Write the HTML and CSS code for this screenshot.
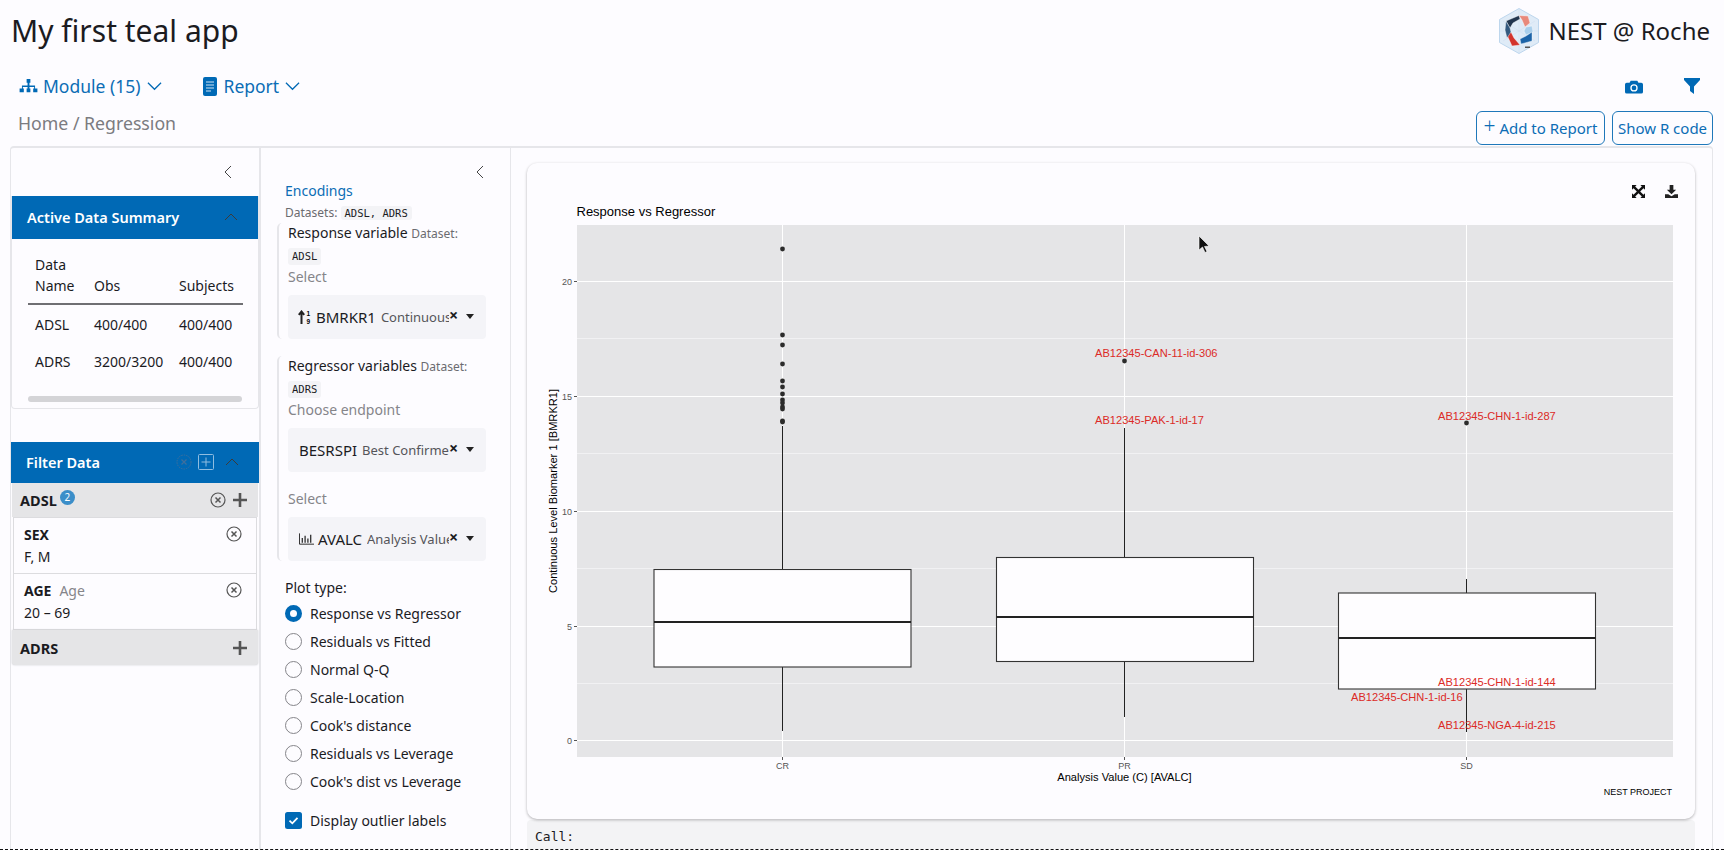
FILE: index.html
```html
<!DOCTYPE html>
<html lang="en">
<head>
  <meta charset="UTF-8">
  <title>My first teal app</title>
  <link rel="stylesheet" href="styles.css">
</head>
<body>
<div class="page">

  <!-- Title row -->
  <header class="top-bar">
    <h1 class="app-title">My first teal app</h1>
    <div class="brand">
      <svg class="brand-logo" viewBox="0 0 40 46">
        <polygon points="20,0.500 39.500,11.500 39.500,34.500 20,45.500 0.500,34.500 0.500,11.500" fill="#dfebf7" stroke="#bdd6ed"/>
        <path d="M1 23H39M20 1V45M4 13L36 33M36 13L4 33" stroke="#cadcf0" stroke-width="0.400"/>
        <g stroke="#fff" stroke-width="0.400">
          <path d="M7 13L20 7.500L21 11L14 15L11 20Z" fill="#22364f"/>
          <path d="M20 7.500L29 8L31 15L26 19L23 12Z" fill="#e8897b"/>
          <path d="M27 19L33 18L34 24L27 27L25 23Z" fill="#a9cfec"/>
          <path d="M33 24L33 33L22 36L21 31L27 28Z" fill="#1c64a8"/>
          <path d="M21 37L13 38L8 27L12 24L15 30Z" fill="#d3332c"/>
          <path d="M7 13L11 20L12 24L8 30L6 22Z" fill="#33597f"/>
        </g>
        <path d="M26 38.500h5v1.500h-5z" fill="#555"/>
      </svg>
      <span class="brand-name">NEST @ Roche</span>
    </div>
  </header>

  <!-- Nav row -->
  <nav class="nav-bar">
    <a class="nav-link nav-module">
      <svg class="nav-icon" viewBox="0 0 20 16"><path d="M8 0h4v4h-1v3h6v3h2.500v4h-4.500v-4h1v-1.500h-5v1.500h1v4h-4v-4h1v-1.500h-5v1.500h1v4h-4.500v-4h2.500v-3h6v-3h-1z" fill="#0069b5"/></svg>
      Module (15)
      <svg class="nav-caret" viewBox="0 0 16 10"><path d="M1 1.500L8 8.500L15 1.500" fill="none" stroke="#0069b5" stroke-width="1.300"/></svg>
    </a>
    <a class="nav-link nav-report">
      <svg class="nav-icon-file" viewBox="0 0 14 19"><rect width="14" height="19" rx="2" fill="#0069b5"/><path d="M3 5h8M3 8h8M3 11h8M3 14h5" stroke="#cfe3f3" stroke-width="1.100"/></svg>
      Report
      <svg class="nav-caret" viewBox="0 0 16 10"><path d="M1 1.500L8 8.500L15 1.500" fill="none" stroke="#0069b5" stroke-width="1.300"/></svg>
    </a>
    <div class="nav-tools">
      <svg class="tool-camera" viewBox="0 0 19 15"><path d="M6 1.500h7l1.200 2h3a1.800 1.800 0 0 1 1.800 1.800v7.900a1.800 1.800 0 0 1-1.800 1.800h-15.400a1.800 1.800 0 0 1-1.800-1.800v-7.900a1.800 1.800 0 0 1 1.800-1.800h3z" fill="#0069b5"/><circle cx="9.500" cy="9" r="3.200" fill="none" stroke="#fff" stroke-width="1.400"/></svg>
      <svg class="tool-filter" viewBox="0 0 16 16"><path d="M0 0h16v2L10 8.500V16L6 13V8.500L0 2z" fill="#0069b5"/></svg>
    </div>
  </nav>

  <!-- Breadcrumb row -->
  <div class="crumb-row">
    <div class="crumbs">Home / Regression</div>
    <div class="crumb-buttons">
      <button class="outline-btn btn-report"><span class="plus">+</span> Add to Report</button>
      <button class="outline-btn btn-code">Show R code</button>
    </div>
  </div>

  <main class="workspace">

    <!-- Filter panel -->
    <aside class="side-col">
      <div class="collapse-row">
        <svg class="chevron" viewBox="0 0 8 14"><path d="M7 1L1 7L7 13" fill="none" stroke="#444" stroke-width="1"/></svg>
      </div>

      <section class="summary">
        <div class="blue-head">
          <span>Active Data Summary</span>
          <svg class="head-caret" viewBox="0 0 14 8"><path d="M1 7L7 1L13 7" fill="none" stroke="#3b3b3b" stroke-width="1"/></svg>
        </div>
        <div class="summary-body">
          <table class="summary-table">
            <thead>
              <tr><th class="col-name">Data<br>Name</th><th class="col-obs">Obs</th><th>Subjects</th></tr>
            </thead>
            <tbody>
              <tr><td>ADSL</td><td>400/400</td><td>400/400</td></tr>
              <tr><td>ADRS</td><td>3200/3200</td><td>400/400</td></tr>
            </tbody>
          </table>
          <div class="fake-scroll"></div>
        </div>
      </section>

      <section class="filter-box">
        <div class="blue-head filter-head">
          <span>Filter Data</span>
          <svg class="head-x" viewBox="0 0 16 16"><circle cx="8" cy="8" r="7" fill="none" stroke="#3f6f9c" stroke-width="1" stroke-dasharray="1.500 1"/><path d="M5.500 5.500l5 5M10.500 5.500l-5 5" stroke="#3f6f9c" stroke-width="1.200"/></svg>
          <svg class="head-plus" viewBox="0 0 16 16"><rect x="0.500" y="0.500" width="15" height="15" rx="1" fill="none" stroke="#8fbde0"/><path d="M8 3.500v9M3.500 8h9" stroke="#8fbde0"/></svg>
          <svg class="head-caret" viewBox="0 0 14 8"><path d="M1 7L7 1L13 7" fill="none" stroke="#3b3b3b" stroke-width="1"/></svg>
        </div>

        <div class="data-row">
          <b>ADSL</b><span class="count-badge">2</span>
          <svg class="x-circle x-row" viewBox="0 0 16 16"><circle cx="8" cy="8" r="7" fill="none" stroke="#555" stroke-width="1.200"/><path d="M5.500 5.500l5 5M10.500 5.500l-5 5" stroke="#555" stroke-width="1.500"/></svg>
          <svg class="row-plus" viewBox="0 0 14 14"><path d="M7 0v14M0 7h14" stroke="#555" stroke-width="2.600"/></svg>
        </div>
        <div class="filter-card">
          <div class="filter-line">
            <b>SEX</b>
            <svg class="x-circle" viewBox="0 0 16 16"><circle cx="8" cy="8" r="7" fill="none" stroke="#555" stroke-width="1.200"/><path d="M5.500 5.500l5 5M10.500 5.500l-5 5" stroke="#555" stroke-width="1.500"/></svg>
          </div>
          <div class="filter-value">F, M</div>
        </div>
        <div class="filter-card">
          <div class="filter-line">
            <b>AGE</b><span class="filter-sub">Age</span>
            <svg class="x-circle" viewBox="0 0 16 16"><circle cx="8" cy="8" r="7" fill="none" stroke="#555" stroke-width="1.200"/><path d="M5.500 5.500l5 5M10.500 5.500l-5 5" stroke="#555" stroke-width="1.500"/></svg>
          </div>
          <div class="filter-value">20 – 69</div>
        </div>
        <div class="data-row data-row-last">
          <b>ADRS</b>
          <svg class="row-plus row-plus-only" viewBox="0 0 14 14"><path d="M7 0v14M0 7h14" stroke="#555" stroke-width="2.600"/></svg>
        </div>
      </section>
    </aside>

    <!-- Encodings panel -->
    <aside class="enc-col">
      <div class="collapse-row enc-collapse">
        <svg class="chevron" viewBox="0 0 8 14"><path d="M7 1L1 7L7 13" fill="none" stroke="#444" stroke-width="1"/></svg>
      </div>
      <div class="enc-title">Encodings</div>
      <div class="enc-datasets">Datasets: <code class="chip">ADSL, ADRS</code></div>

      <div class="enc-group">
        <div class="enc-label">Response variable <small>Dataset:</small></div>
        <code class="chip chip-block">ADSL</code>
        <div class="enc-hint">Select</div>
        <div class="select-box">
          <svg class="opt-icon" viewBox="0 0 14 14"><path d="M3.500 14V2M0.800 4.800L3.500 1.500L6.200 4.800" fill="none" stroke="#222" stroke-width="2"/><text x="8.500" y="6" class="opt-digit">1</text><text x="8.500" y="13.500" class="opt-digit">9</text></svg>
          <span class="opt-main">BMRKR1</span><span class="opt-sub">Continuous</span>
          <span class="opt-x">×</span><span class="opt-caret"></span>
        </div>
      </div>

      <div class="enc-group enc-group-two">
        <div class="enc-label">Regressor variables <small>Dataset:</small></div>
        <code class="chip chip-block">ADRS</code>
        <div class="enc-hint">Choose endpoint</div>
        <div class="select-box">
          <span class="opt-main">BESRSPI</span><span class="opt-sub">Best Confirmed</span>
          <span class="opt-x">×</span><span class="opt-caret"></span>
        </div>
        <div class="enc-hint hint-gap">Select</div>
        <div class="select-box">
          <svg class="opt-icon opt-chart" viewBox="0 0 16 12"><path d="M0.500 0V11.500H16" fill="none" stroke="#222"/><path d="M3.500 5v5M6.500 2.500v7.500M9.500 5.500v4.500M12.500 1.500v8.500" stroke="#222" stroke-width="1.300"/></svg>
          <span class="opt-main">AVALC</span><span class="opt-sub">Analysis Value</span>
          <span class="opt-x">×</span><span class="opt-caret"></span>
        </div>
      </div>

      <div class="plot-type">Plot type:</div>
      <ul class="radio-list">
        <li><span class="radio radio-on"></span>Response vs Regressor</li>
        <li><span class="radio"></span>Residuals vs Fitted</li>
        <li><span class="radio"></span>Normal Q-Q</li>
        <li><span class="radio"></span>Scale-Location</li>
        <li><span class="radio"></span>Cook's distance</li>
        <li><span class="radio"></span>Residuals vs Leverage</li>
        <li><span class="radio"></span>Cook's dist vs Leverage</li>
      </ul>
      <div class="check-row">
        <svg class="check" viewBox="0 0 17 17"><rect width="17" height="17" rx="2.500" fill="#0069b5"/><path d="M4.500 8.700L7.300 11.300L12.500 5.800" fill="none" stroke="#fff" stroke-width="1.800"/></svg>
        Display outlier labels
      </div>
    </aside>

    <!-- Plot output -->
    <section class="output-col">
      <div class="plot-card">
        <div class="plot-tools">
          <svg class="plot-tool" viewBox="0 0 14 14"><path d="M0 0h5L3.400 1.600 7 5.200 10.600 1.600 9 0h5v5l-1.600-1.600L8.800 7l3.600 3.600L14 9v5H9l1.600-1.600L7 8.800 3.400 12.400 5 14H0V9l1.600 1.600L5.200 7 1.600 3.400 0 5z" fill="#111"/></svg>
          <svg class="plot-tool" viewBox="0 0 14 14"><path d="M5 0h4v5h3L7 10 2 5h3zM0 10h3.500L7 12l3.500-2H14v4H0z" fill="#222"/></svg>
        </div>
        <svg class="plot" viewBox="527 163 1168 656">
          <text x="576.500" y="216" class="plot-title">Response vs Regressor</text>
          <rect x="577" y="225" width="1096" height="532" fill="#e5e5e7"/>
          <!-- grid -->
          <g stroke="#f1f1f3" stroke-width="1">
            <path d="M577 338.500H1673M577 453.500H1673M577 568.500H1673M577 683.500H1673"/>
          </g>
          <g stroke="#fff" stroke-width="1">
            <path d="M577 281.500H1673M577 396.500H1673M577 511.500H1673M577 626.500H1673M577 740.500H1673"/>
            <path d="M782.500 225V757M1124.500 225V757M1466.500 225V757"/>
          </g>
          <!-- y axis -->
          <g stroke="#555" stroke-width="1">
            <path d="M574 281.500h3M574 396.500h3M574 511.500h3M574 626.500h3M574 740.500h3"/>
            <path d="M782.500 757v3M1124.500 757v3M1466.500 757v3"/>
          </g>
          <g class="tick-label" text-anchor="end">
            <text x="572" y="285">20</text>
            <text x="572" y="400">15</text>
            <text x="572" y="515">10</text>
            <text x="572" y="630">5</text>
            <text x="572" y="744">0</text>
          </g>
          <g class="tick-label" text-anchor="middle">
            <text x="782.500" y="769">CR</text>
            <text x="1124.500" y="769">PR</text>
            <text x="1466.500" y="769">SD</text>
          </g>
          <text class="axis-title" text-anchor="middle" transform="translate(557 491) rotate(-90)">Continuous Level Biomarker 1 [BMRKR1]</text>
          <text class="axis-title" x="1124.500" y="781" text-anchor="middle">Analysis Value (C) [AVALC]</text>
          <text class="caption" x="1672" y="795" text-anchor="end">NEST PROJECT</text>
          <!-- whiskers -->
          <g stroke="#222" stroke-width="1">
            <path d="M782.500 426V569M782.500 667V731"/>
            <path d="M1124.500 428V557M1124.500 662V717"/>
            <path d="M1466.500 579V593M1466.500 689V732"/>
          </g>
          <!-- boxes -->
          <g fill="#fefdff" stroke="#333" stroke-width="1.100">
            <rect x="654" y="569.500" width="257" height="97.500"/>
            <rect x="996.500" y="557.500" width="257" height="104"/>
            <rect x="1338.500" y="593" width="257" height="96"/>
          </g>
          <g stroke="#222" stroke-width="2">
            <path d="M654 622H911M996.500 617H1253.500M1338.500 638H1595.500"/>
          </g>
          <!-- outliers -->
          <g fill="#2b2b2b">
            <circle cx="782.500" cy="249" r="2.400"/>
            <circle cx="782.500" cy="335" r="2.400"/>
            <circle cx="782.500" cy="345" r="2.400"/>
            <circle cx="782.500" cy="364" r="2.400"/>
            <circle cx="782.500" cy="381" r="2.400"/>
            <circle cx="782.500" cy="387" r="2.400"/>
            <circle cx="782.500" cy="394" r="2.400"/>
            <circle cx="782.500" cy="400" r="2.400"/>
            <circle cx="782.500" cy="403" r="2.400"/>
            <circle cx="782.500" cy="407" r="2.400"/>
            <circle cx="782.500" cy="409" r="2.400"/>
            <circle cx="782.500" cy="421" r="2.400"/>
            <circle cx="782.500" cy="422" r="2.400"/>
            <circle cx="1124.500" cy="361" r="2.400"/>
            <circle cx="1466.500" cy="423" r="2.400"/>
          </g>
          <!-- outlier labels -->
          <g class="outlier-label">
            <text x="1095" y="357">AB12345-CAN-11-id-306</text>
            <text x="1095" y="424">AB12345-PAK-1-id-17</text>
            <text x="1438" y="420">AB12345-CHN-1-id-287</text>
            <text x="1438" y="686">AB12345-CHN-1-id-144</text>
            <text x="1351" y="701">AB12345-CHN-1-id-16</text>
            <text x="1438" y="729">AB12345-NGA-4-id-215</text>
          </g>
          <!-- mouse pointer in the shot -->
          <path d="M1199 236V250L1202.500 247L1205 252.500L1207 251.500L1204.500 246.500L1209 246Z" fill="#111" stroke="#fff" stroke-width="0.600"/>
        </svg>
      </div>
      <pre class="call-block">Call:</pre>
    </section>
  </main>
</div>
</body>
</html>
```

FILE: styles.css
```css
* {
  box-sizing: border-box;
}

body {
  margin: 0;
  background-color: #fdfcff;
  color: #1b1b1f;
  font-family: "Noto Sans", "Open Sans", sans-serif;
  font-size: 14px;
}

.page {
  height: 850px;
  overflow: hidden;
  border-bottom: 1px dashed #111;
}

/* Title row */
.top-bar {
  display: flex;
  justify-content: space-between;
  align-items: center;
  height: 61px;
  padding: 0 14px 0 11px;
}

.app-title {
  margin: 0;
  font-size: 30px;
  font-weight: 400;
}

.brand {
  display: flex;
  align-items: center;
  gap: 10px;
}

.brand-logo {
  width: 40px;
  height: 46px;
}

.brand-name {
  font-size: 24px;
}

/* Nav row */
.nav-bar {
  display: flex;
  align-items: center;
  height: 50px;
  padding: 0 0 0 19px;
}

.nav-link {
  display: flex;
  align-items: center;
  color: #0c6db5;
  font-size: 17.500px;
}

.nav-icon {
  width: 19px;
  height: 15px;
  margin-right: 5px;
}

.nav-icon-file {
  width: 14px;
  height: 19px;
  margin-right: 7px;
}

.nav-caret {
  width: 15px;
  height: 10px;
  margin-left: 6px;
}

.nav-report {
  margin-left: 41px;
}

.nav-tools {
  display: flex;
  align-items: center;
  gap: 41px;
  margin-left: auto;
  padding-right: 24px;
}

.tool-camera {
  width: 18px;
  height: 15px;
}

.tool-filter {
  width: 16px;
  height: 16px;
}

/* Breadcrumb row */
.crumb-row {
  display: flex;
  justify-content: space-between;
  align-items: flex-start;
  height: 35px;
  padding: 0 11px 0 18px;
}

.crumbs {
  color: #7b7b80;
  font-size: 17.700px;
}

.crumb-buttons {
  display: flex;
  gap: 7px;
}

.outline-btn {
  height: 34px;
  padding: 0;
  background-color: transparent;
  border: 1px solid #1f78ba;
  border-radius: 6px;
  color: #0c6db5;
  font-family: inherit;
  font-size: 15px;
}

.btn-report {
  width: 129px;
}

.btn-code {
  width: 101px;
}

.plus {
  font-size: 21px;
  font-weight: 300;
  line-height: 14px;
}

/* Main area */
.workspace {
  display: flex;
  height: 704px;
  margin: 0 11px 0 10px;
  border-top: 2px solid #e6e6ea;
  border-left: 1px solid #e6e6ea;
  border-right: 1px solid #e6e6ea;
  border-radius: 4px 4px 0 0;
}

.side-col {
  flex: none;
  width: 250px;
  border-right: 2px solid #e6e6ea;
}

.enc-col {
  flex: none;
  width: 250px;
  padding-left: 24px;
  border-right: 1px solid #e6e6ea;
}

.output-col {
  flex: 1;
  padding: 15px 17px 0 16px;
}

.collapse-row {
  display: flex;
  justify-content: flex-end;
  align-items: center;
  height: 48px;
  padding-right: 27px;
}

.chevron {
  width: 8px;
  height: 14px;
}

/* Filter panel */
.summary {
  height: 213px;
  border: 1px solid #e6e6ea;
  border-top: none;
  border-radius: 0 0 4px 4px;
}

.blue-head {
  display: flex;
  align-items: center;
  height: 43px;
  padding: 0 20px 2px 15px;
  background-color: #0069b5;
  color: #fff;
  font-size: 14.500px;
  font-weight: 600;
}

.blue-head span {
  margin-right: auto;
}

.head-caret {
  width: 14px;
  height: 8px;
}

.head-x {
  width: 16px;
  height: 16px;
  margin-right: 6px;
}

.head-plus {
  width: 16px;
  height: 16px;
  margin-right: 11px;
}

.summary-body {
  padding: 15px 16px 0;
}

.summary-table {
  width: 215px;
  border-collapse: collapse;
  font-size: 14px;
}

.summary-table th {
  padding: 0 0 7px 7px;
  border-bottom: 2px solid #6f6f73;
  font-weight: 400;
  line-height: 21px;
  text-align: left;
  vertical-align: bottom;
}

.summary-table td {
  height: 37px;
  padding: 0 0 0 7px;
}

.summary-table tbody tr:first-child td {
  height: 39px;
}

.col-name {
  width: 59px;
}

.col-obs {
  width: 85px;
}

.fake-scroll {
  height: 6px;
  margin-top: 16px;
  background-color: #d4d4d7;
  border-radius: 3px;
}

.filter-box {
  margin-top: 33px;
}

.filter-head {
  height: 41px;
  padding-bottom: 1px;
}

.data-row {
  display: flex;
  align-items: center;
  height: 34px;
  margin: 0 1px;
  padding: 0 11px 0 8px;
  background-color: #e5e5e7;
  font-size: 14.500px;
}

.data-row-last {
  height: 35px;
  margin-top: 1px;
  border-radius: 0 0 3px 3px;
  box-shadow: 0 0 2px #c8c8cc;
}

.data-row b {
  font-weight: 700;
}

.count-badge {
  width: 15px;
  height: 15px;
  margin: -6px 0 0 3px;
  background-color: #3b8ec9;
  border-radius: 50%;
  color: #fff;
  font-size: 10px;
  line-height: 15px;
  text-align: center;
}

.x-circle {
  width: 16px;
  height: 16px;
  margin-left: auto;
}

.x-row {
  margin-right: 7px;
}

.row-plus {
  width: 14px;
  height: 14px;
}

.row-plus-only {
  margin-left: auto;
}

.filter-card {
  height: 55px;
  margin: 1px 3px;
  padding: 3px 14px 0 10px;
  background-color: #fdfcff;
  box-shadow: 0 0 0 1px #dcdcdf;
}

.filter-line {
  display: flex;
  align-items: center;
  height: 26px;
}

.filter-line b {
  font-weight: 700;
}

.filter-sub {
  margin-left: 8px;
  color: #85858a;
}

.filter-value {
  line-height: 20px;
}

/* Encodings panel */
.enc-collapse {
  padding-right: 26px;
}

.enc-title {
  margin-top: -16px;
  color: #0c6db5;
  font-size: 14px;
  line-height: 22px;
}

.enc-datasets {
  margin-top: 2px;
  color: #6b6b70;
  font-size: 12px;
  line-height: 18px;
}

.chip {
  padding: 1px 4px;
  background-color: #f3f3f6;
  border-radius: 3px;
  color: #1b1b1f;
  font-family: "DejaVu Sans Mono", "Liberation Mono", monospace;
  font-size: 10.500px;
}

.chip-block {
  display: block;
  width: fit-content;
  height: 17px;
  margin-top: 4px;
  line-height: 15px;
}

.enc-group {
  width: 209px;
  margin: 1px 0 0 -8px;
  padding: 0 0 0 9px;
  border-left: 2px solid #e6e6ea;
  border-radius: 5px 0 0 5px;
}

.enc-group-two {
  margin-top: 17px;
}

.enc-label {
  font-size: 14px;
  line-height: 20px;
}

.enc-label small {
  color: #6b6b70;
  font-size: 12px;
}

.enc-hint {
  margin: 2px 0 8px;
  color: #85858a;
  font-size: 14px;
  line-height: 20px;
}

.hint-gap {
  margin-top: 17px;
}

.select-box {
  display: flex;
  align-items: center;
  width: 198px;
  height: 44px;
  padding-left: 11px;
  background-color: #f4f4f8;
  border-radius: 4px;
  overflow: hidden;
  white-space: nowrap;
}

.opt-icon {
  flex: none;
  width: 14px;
  height: 14px;
  margin: 0 4px 0 -1px;
}

.opt-chart {
  width: 15px;
  height: 12px;
  margin-left: 0;
}

.opt-digit {
  font-family: "Liberation Sans", sans-serif;
  font-size: 6.500px;
  font-weight: 700;
}

.opt-main {
  flex: none;
  font-size: 15px;
}

.opt-sub {
  flex: 0 1 auto;
  min-width: 0;
  margin-left: 5px;
  overflow: hidden;
  color: #55555a;
  font-size: 13px;
}

.opt-x {
  flex: none;
  width: 8px;
  margin: -3px 0 0 auto;
  font-size: 16px;
  font-weight: 700;
  line-height: 15px;
}

.opt-caret {
  flex: none;
  margin: -1px 12px 0 9px;
  border-top: 5px solid #222;
  border-left: 4px solid transparent;
  border-right: 4px solid transparent;
}

.plot-type {
  margin-top: 17px;
  line-height: 20px;
}

.radio-list {
  margin: 1px 0 0;
  padding: 0;
  list-style: none;
}

.radio-list li {
  display: flex;
  align-items: center;
  gap: 8px;
  height: 28px;
}

.radio {
  width: 17px;
  height: 17px;
  background-color: #fdfcff;
  border: 1px solid #85858a;
  border-radius: 50%;
}

.radio-on {
  border: 5px solid #0069b5;
}

.check-row {
  display: flex;
  align-items: center;
  gap: 8px;
  height: 20px;
  margin-top: 15px;
}

.check {
  width: 17px;
  height: 17px;
}

/* Plot output */
.plot-card {
  position: relative;
  height: 656px;
  border-radius: 10px;
  box-shadow: 0 1px 3px rgba(0, 0, 0, 0.3);
}

.plot-tools {
  position: absolute;
  top: 22px;
  right: 17px;
  display: flex;
  gap: 20px;
}

.plot-tool {
  width: 13px;
  height: 13px;
}

.plot {
  display: block;
  width: 100%;
  height: 100%;
}

.plot text {
  font-family: "Liberation Sans", Arial, sans-serif;
}

.plot-title {
  font-size: 13px;
}

.plot .tick-label text {
  fill: #555;
  font-size: 9px;
}

.axis-title {
  font-size: 11.100px;
}

.caption {
  font-size: 9px;
}

.outlier-label text {
  fill: #dc2a26;
  font-size: 11.100px;
}

.call-block {
  height: 40px;
  margin: 1px 0 0;
  padding: 9px 8px;
  background-color: #f3f3f5;
  border-radius: 4px 4px 0 0;
  font-family: "DejaVu Sans Mono", "Liberation Mono", monospace;
  font-size: 13px;
}
```
